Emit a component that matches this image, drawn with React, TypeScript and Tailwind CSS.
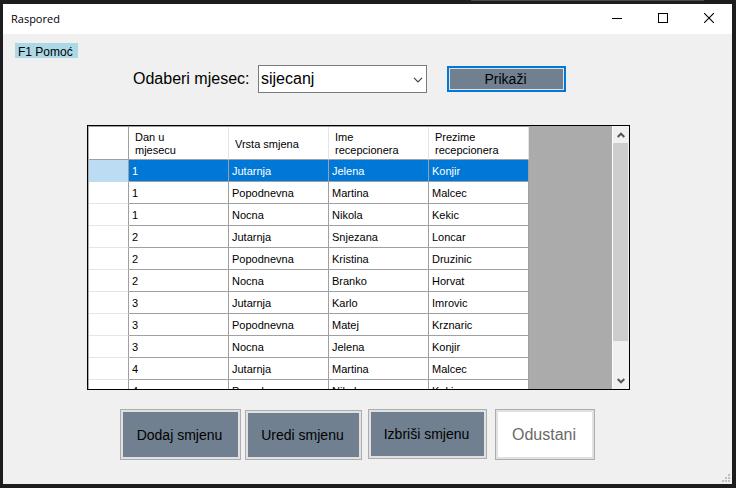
import { useState } from "react";

const rows = [
  [1, "Jutarnja", "Jelena", "Konjir"],
  [1, "Popodnevna", "Martina", "Malcec"],
  [1, "Nocna", "Nikola", "Kekic"],
  [2, "Jutarnja", "Snjezana", "Loncar"],
  [2, "Popodnevna", "Kristina", "Druzinic"],
  [2, "Nocna", "Branko", "Horvat"],
  [3, "Jutarnja", "Karlo", "Imrovic"],
  [3, "Popodnevna", "Matej", "Krznaric"],
  [3, "Nocna", "Jelena", "Konjir"],
  [4, "Jutarnja", "Martina", "Malcec"],
  [4, "Popodnevna", "Nikola", "Kekic"],
];

const headers = ["Dan u mjesecu", "Vrsta smjena", "Ime recepcionera", "Prezime recepcionera"];

const font = "font-['Liberation_Sans',Arial,sans-serif]";
const action =
  "border border-[#adadad] bg-[#708090] pr-[2px] text-sm text-black shadow-[inset_0_0_0_2px_#e1e1e1] whitespace-nowrap";

function TitleBar() {
  return (
    <header className="flex h-[30px] shrink-0 items-center justify-between bg-white pl-2">
      <h1 className="font-['Open_Sans',sans-serif] text-[11px] text-black">Raspored</h1>
      <div className="flex h-full">
        <button aria-label="Minimiziraj" className="flex w-[46px] items-center justify-center pb-[2px]">
          <svg width="10" height="10" shapeRendering="crispEdges">
            <path d="M0 5h10v1H0z" />
          </svg>
        </button>
        <button aria-label="Maksimiziraj" className="flex w-[46px] items-center justify-center pb-[2px]">
          <svg width="10" height="10" fill="none" stroke="#000" shapeRendering="crispEdges">
            <path d="M.5.5h9v9h-9z" />
          </svg>
        </button>
        <button aria-label="Zatvori" className="flex w-[46px] items-center justify-center pb-[2px]">
          <svg width="10" height="10" fill="none" stroke="#000" strokeWidth="1.1">
            <path d="M0 0l10 10M10 0L0 10" />
          </svg>
        </button>
      </div>
    </header>
  );
}

function ScrollBar() {
  return (
    <div className="flex w-[17px] shrink-0 flex-col border-l border-white bg-[#f0f0f0] pr-px">
      <button aria-label="Gore" className="flex h-[17px] items-center justify-center">
        <svg width="8" height="6" fill="none" stroke="#555" strokeWidth="2">
          <path d="M.7 5L4 1.7 7.3 5" />
        </svg>
      </button>
      <div className="flex-1">
        <div className="h-[198px] bg-[#cdcdcd]" />
      </div>
      <button aria-label="Dolje" className="flex h-[17px] items-center justify-center">
        <svg width="8" height="6" fill="none" stroke="#555" strokeWidth="2">
          <path d="M.7 1L4 4.3 7.3 1" />
        </svg>
      </button>
    </div>
  );
}

export default function App() {
  const [selected, setSelected] = useState(0);
  return (
    <div className="flex min-h-screen flex-col bg-[#1d1d1f] pr-1 pb-1 pl-[3px]">
      <div className="flex h-1 shrink-0 items-start justify-end pr-[28px]">
        <div className="h-px w-[233px] bg-[#4a4a4c]" />
      </div>
      <div className={`flex flex-1 flex-col bg-[#f0f0f0] text-black ${font}`}>
        <TitleBar />
        <main className="flex flex-1 flex-col pt-[9px]">
          <div className="ml-3 h-[15px] w-[63px] bg-[#add8e6] pl-[3px] text-[12px] leading-[18px] whitespace-nowrap">
            F1 Pomoć
          </div>

          <div className="mt-[7px] ml-[130px] flex h-7 items-center">
            <label htmlFor="mjesec" className="w-[125px] text-base">
              Odaberi mjesec:
            </label>
            <div className="relative h-7 w-[169px]">
              <select
                id="mjesec"
                defaultValue="sijecanj"
                className="h-full w-full appearance-none border border-[#7a7a7a] bg-white pl-[2px] text-base text-black outline-none"
              >
                <option>sijecanj</option>
                <option>veljaca</option>
                <option>ozujak</option>
              </select>
              <svg
                className="pointer-events-none absolute top-3 right-1"
                width="10"
                height="6"
                fill="none"
                stroke="#444"
                strokeWidth="1.2"
              >
                <path d="M1 .8l4 4 4-4" />
              </svg>
            </div>
            <button className="ml-5 h-[26px] w-[119px] border-2 border-[#0078d7] bg-[#708090] pr-[2px] text-sm text-black shadow-[inset_0_0_0_1px_#e1e1e1]">
              Prikaži
            </button>
          </div>

          <section className="mt-8 mr-[102px] ml-[84px] flex h-[265px] border border-black bg-[#ababab]">
            <div className="flex-1 overflow-hidden">
              <table className="ml-px w-[440px] table-fixed border-separate border-spacing-0 border-t border-[#a0a0a0] bg-white text-[11px] leading-[13px]">
                <thead>
                  <tr className="h-[33px]">
                    <th aria-label="Redak" className="w-10 border-r border-b border-[#a0a0a0] p-0" />
                    {headers.map((h) => (
                      <th
                        key={h}
                        className="w-[100px] border-r border-b border-r-[#e5e5e5] border-b-[#a0a0a0] p-0 pt-[2px] pr-5 pl-[6px] text-left align-middle font-normal"
                      >
                        {h}
                      </th>
                    ))}
                  </tr>
                </thead>
                <tbody>
                  {rows.map((row, i) => (
                    <tr
                      key={i}
                      onClick={() => setSelected(i)}
                      className={i === selected ? "h-[22px] bg-[#0078d7] text-white" : "h-[22px]"}
                    >
                      <th
                        aria-label={`Redak ${i + 1}`}
                        className={
                          i === selected
                            ? "border-r border-b border-r-[#a0a0a0] border-b-[#bcdcf4] bg-[#bcdcf4] p-0"
                            : "border-r border-b border-r-[#a0a0a0] border-b-[#e5e5e5] p-0"
                        }
                      />
                      {row.map((c, j) => (
                        <td key={j} className="border-r border-b border-[#a0a0a0] p-0 pt-[2px] pl-[3px]">
                          {c}
                        </td>
                      ))}
                    </tr>
                  ))}
                </tbody>
              </table>
            </div>
            <ScrollBar />
          </section>

          <div className="mt-[19px] ml-[117px] flex items-start">
            <button className={`h-[51px] w-[121px] ${action}`}>Dodaj smjenu</button>
            <button className={`ml-1 h-[50px] w-[117px] self-end ${action}`}>Uredi smjenu</button>
            <button className={`ml-[6px] h-[50px] w-[119px] ${action}`}>Izbriši smjenu</button>
            <button className="ml-2 h-[51px] w-[100px] border border-[#adadad] bg-white pr-[2px] text-base text-[#696969] shadow-[inset_0_0_0_2px_#e1e1e1]">
              Odustani
            </button>
          </div>

          <svg className="mt-auto mr-[2px] mb-[2px] self-end" width="8" height="8" fill="#bfbfbf">
            <path d="M6 0h2v2H6zM3 3h2v2H3zM6 3h2v2H6zM0 6h2v2H0zM3 6h2v2H3zM6 6h2v2H6z" />
          </svg>
        </main>
      </div>
    </div>
  );
}
